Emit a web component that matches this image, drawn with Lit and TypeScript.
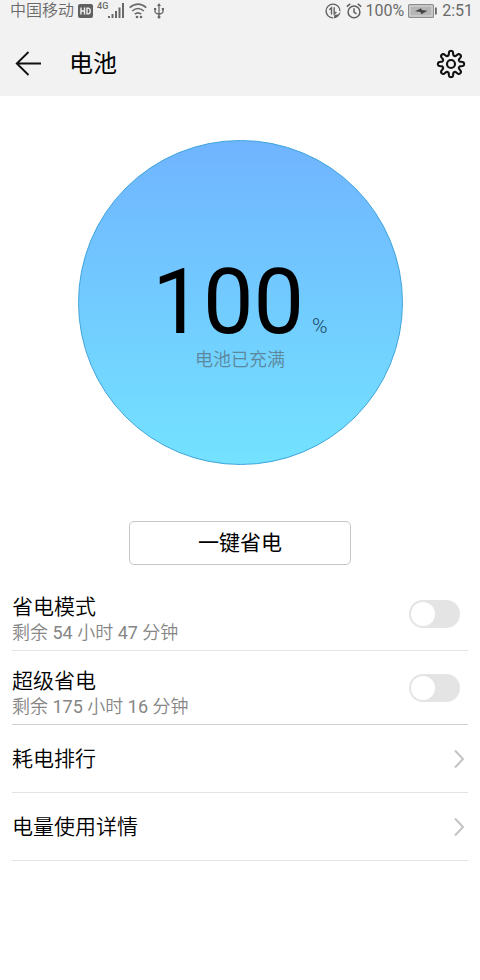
import { LitElement, html, css, svg } from "lit";
import { customElement, property } from "lit/decorators.js";

/** Closed outline of a soft eight-tooth cog centred on the origin. */
function cogOutline(mid: number, depth: number, teeth: number): string {
  const steps = 240;
  const points: string[] = [];
  for (let i = 0; i < steps; i++) {
    const a = (i / steps) * Math.PI * 2;
    const r = mid + depth * Math.tanh(1.8 * Math.cos(a * teeth));
    points.push(`${(Math.sin(a) * r).toFixed(2)} ${(-Math.cos(a) * r).toFixed(2)}`);
  }
  return `M${points.join("L")}Z`;
}

const backIcon = svg`<svg width="28" height="28" viewBox="0 0 28 28" fill="none" stroke="#111" stroke-width="1.9">
  <path d="M14.500 2 2.800 13.500l11.700 11.500M3 13.500h24"/></svg>`;

const gearIcon = svg`<svg width="30" height="30" viewBox="-15 -15 30 30" fill="none" stroke="#111" stroke-width="2.1" stroke-linejoin="round">
  <path d=${cogOutline(10.9, 2.3, 8)}/><circle r="4"/></svg>`;

const chevron = svg`<svg class="chevron" width="12" height="20" viewBox="0 0 12 20" fill="none" stroke="#c4c4c4" stroke-width="2">
  <path d="M2 1.500l8 8.500-8 8.500"/></svg>`;

const hdIcon = svg`<svg width="15" height="14" viewBox="0 0 15 14">
  <rect width="15" height="14" rx="2" fill="#606060"/>
  <path d="M3 3.500v7M6.500 3.500v7M3 7h3.500M9 4.100v5.800h1.200q2 0 2-2.900t-2-2.900z" fill="none" stroke="#f2f2f2" stroke-width="1.4"/></svg>`;

const signalIcon = svg`<svg width="17" height="16" viewBox="0 0 17 16" fill="#686868">
  <path d="M0 13h2v2H0zM3.500 11h2v4h-2zM7 8h2v7H7zM10.500 4.500h2V15h-2zM14 0h2v15h-2z"/></svg>`;

const wifiIcon = svg`<svg width="18" height="16" viewBox="0 0 18 16" fill="none" stroke="#686868" stroke-width="1.6">
  <path d="M.7 4.700Q9-2.400 17.300 4.700M3.200 8q5.800-5 11.600 0M5.800 11.200q3.200-2.800 6.400 0"/>
  <g fill="#686868" stroke="none"><circle cx="8" cy="14" r="1.300"/><circle cx="12" cy="14" r="1.300"/></g></svg>`;

const usbIcon = svg`<svg width="12" height="16" viewBox="0 0 12 16" fill="none" stroke="#686868" stroke-width="1.3">
  <path d="M6 2v12M2 6.500v2q0 1.500 1.500 1.800L6 11.500l2.500-1.200Q10 10 10 8.500v-2"/>
  <path d="M6 0l2 3H4zM1 5h2.200v2.200H1zM8.800 5H11v2.200H8.800z" fill="#686868" stroke="none"/>
  <circle cx="6" cy="14" r="1.500" fill="#686868" stroke="none"/></svg>`;

const dataIcon = svg`<svg width="16" height="16" viewBox="0 0 16 16" fill="none" stroke="#606060" stroke-width="1.4">
  <path d="M14.900 8A6.900 6.900 0 1 0 8 14.900"/>
  <path d="M6.500 11.500V4.800L4.300 6.800M9.200 4.300v6.700l2.200-2"/>
  <path d="M15.600 8.500a7.500 7.500 0 0 1-7 7l.9-3.700 3.500-.4z" fill="#606060" stroke="none"/></svg>`;

const alarmIcon = svg`<svg width="16" height="16" viewBox="0 0 16 16" fill="none" stroke="#606060" stroke-width="1.5">
  <circle cx="8" cy="8.900" r="5.900"/><path d="M8 5.300V9l2.500 1.800M.8 3.700 4.200.9M15.200 3.700 11.800.9"/></svg>`;

const batteryIcon = svg`<svg width="29" height="14" viewBox="0 0 29 14">
  <rect x=".6" y=".6" width="24.800" height="12.800" rx="1" fill="#dadada" stroke="#8c8c8c" stroke-width="1.200"/>
  <rect x="2.500" y="2.500" width="21" height="9" fill="#b5b5b5"/>
  <path d="M7 7.300 13 4.200l.8 1.800 5.700.7-6.200 3.500-.8-2.200z" fill="#444"/>
  <path d="M27 3.500h1.800v7H27z" fill="#666"/></svg>`;

@customElement("status-bar")
export class StatusBar extends LitElement {
  static styles = css`
    :host {
      display: flex;
      justify-content: space-between;
      align-items: center;
      height: 20px;
      padding: 1px 7px 0 10px;
      font-size: 16px;
      line-height: 20px;
      color: #6a6a6a;
    }
    .group {
      display: flex;
      align-items: center;
      white-space: nowrap;
    }
    .carrier {
      margin-right: 4px;
      font-weight: 350;
    }
    .network {
      align-self: flex-start;
      margin-left: 4px;
      font-size: 9px;
      line-height: 10px;
      font-weight: 500;
    }
    .wifi {
      margin: 0 6px 0 4px;
    }
    .alarm {
      margin: 0 3px 0 5px;
    }
    .battery {
      margin: 0 5px 0 4px;
    }
    svg {
      display: block;
    }
  `;

  render() {
    return html`
      <div class="group">
        <span class="carrier">中国移动</span>
        ${hdIcon}
        <span class="network">4G</span>
        ${signalIcon}
        <span class="wifi">${wifiIcon}</span>
        ${usbIcon}
      </div>
      <div class="group">
        ${dataIcon}
        <span class="alarm">${alarmIcon}</span>
        <span>100%</span>
        <span class="battery">${batteryIcon}</span>
        <span>2:51</span>
      </div>
    `;
  }
}

@customElement("switch-row")
export class SwitchRow extends LitElement {
  @property() label = "";
  @property({ type: Number }) hours = 0;
  @property({ type: Number }) minutes = 0;

  static styles = css`
    :host {
      display: block;
    }
    .row {
      display: flex;
      align-items: center;
      justify-content: space-between;
      height: 73px;
      padding-right: 8px;
    }
    .text {
      padding-top: 12px;
    }
    .label,
    .detail {
      display: block;
      line-height: 26px;
    }
    .label {
      font-size: 21px;
      font-weight: 350;
      color: #000;
    }
    .detail {
      font-size: 18px;
      font-weight: 350;
      color: #868686;
    }
    .count {
      font-weight: 400;
    }
    .switch {
      appearance: none;
      display: flex;
      align-items: center;
      box-sizing: border-box;
      width: 51px;
      height: 28px;
      margin: 0;
      padding: 2px;
      border-radius: 14px;
      background: #e4e4e4;
    }
    .switch::before {
      content: "";
      width: 24px;
      height: 24px;
      border-radius: 50%;
      background: #fff;
    }
    .switch:checked {
      justify-content: flex-end;
      background: #2f8df5;
    }
  `;

  render() {
    return html`
      <div class="row">
        <label class="text" for="toggle">
          <span class="label">${this.label}</span>
          <span class="detail"
            >剩余<span class="count"> ${this.hours} </span>小时<span class="count"> ${this.minutes} </span>分钟</span
          >
        </label>
        <input class="switch" id="toggle" type="checkbox" role="switch" />
      </div>
    `;
  }
}

@customElement("app-root")
export class AppRoot extends LitElement {
  static styles = css`
    :host {
      display: block;
      min-height: 100vh;
      background: #fff;
      color: #111;
      font-family: Roboto, "Noto Sans CJK SC", sans-serif;
    }
    .top {
      background: #f2f2f2;
    }
    .bar {
      display: flex;
      align-items: center;
      height: 64px;
      margin-top: 11px;
      padding: 0 14px;
    }
    .title {
      flex: 1;
      margin: 0 0 0 27px;
      font-size: 24px;
      line-height: 32px;
      font-weight: 400;
      color: #000;
    }
    .icon {
      display: block;
      padding: 0;
      border: 0;
      background: none;
    }
    svg {
      display: block;
    }
    .hero {
      display: flex;
      flex-direction: column;
      align-items: center;
      padding: 44px 16px 12px;
    }
    .gauge {
      display: flex;
      flex-direction: column;
      align-items: center;
      box-sizing: border-box;
      width: 325px;
      height: 325px;
      padding-top: 127px;
      border: 1px solid #3fa4dc;
      border-radius: 50%;
      background: linear-gradient(#70b4ff, #73e2ff);
    }
    .level {
      display: flex;
      align-items: baseline;
      gap: 8px;
      height: 80px;
      line-height: 70px;
      color: #000;
    }
    .number {
      font-size: 90px;
    }
    .unit {
      font-size: 21px;
      font-weight: 300;
      color: #1f4a68;
    }
    .state {
      margin: 0;
      font-size: 18px;
      line-height: 24px;
      font-weight: 350;
      color: #5c879c;
    }
    .save {
      width: 222px;
      height: 44px;
      margin-top: 56px;
      border: 1px solid #c6c6c6;
      border-radius: 5px;
      background: #fff;
      color: #000;
      font: 400 21px/30px Roboto, "Noto Sans CJK SC", sans-serif;
    }
    .list {
      margin: 0;
      padding: 0 12px;
      list-style: none;
    }
    .item {
      border-bottom: 1px solid #e4e4e4;
    }
    .section-end {
      border-bottom-color: #cfcfcf;
    }
    .link {
      display: flex;
      align-items: center;
      justify-content: space-between;
      height: 67px;
      padding-right: 3px;
      font-size: 21px;
      font-weight: 350;
      line-height: 30px;
      color: #000;
      text-decoration: none;
    }
  `;

  render() {
    return html`
      <header class="top">
        <status-bar></status-bar>
        <div class="bar">
          <button class="icon" aria-label="返回">${backIcon}</button>
          <h1 class="title">电池</h1>
          <button class="icon" aria-label="设置">${gearIcon}</button>
        </div>
      </header>
      <main>
        <section class="hero">
          <div class="gauge">
            <div class="level"><span class="number">100</span><span class="unit">%</span></div>
            <p class="state">电池已充满</p>
          </div>
          <button class="save">一键省电</button>
        </section>
        <ul class="list">
          <li class="item"><switch-row label="省电模式" hours="54" minutes="47"></switch-row></li>
          <li class="item section-end"><switch-row label="超级省电" hours="175" minutes="16"></switch-row></li>
          <li class="item"><a class="link" href="#ranking">耗电排行${chevron}</a></li>
          <li class="item"><a class="link" href="#details">电量使用详情${chevron}</a></li>
        </ul>
      </main>
    `;
  }
}
